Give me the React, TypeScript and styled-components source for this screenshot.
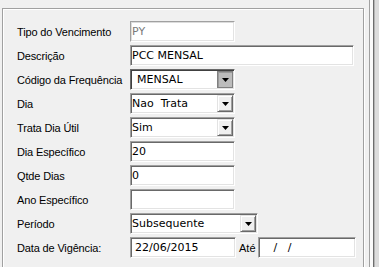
import styled, {createGlobalStyle} from "styled-components";

const GlobalStyle = createGlobalStyle`
    html, body {
        margin: 0;
        padding: 0;
        background: #f0f0f0;
    }
    body {
        font-family: "Liberation Sans", Arial, sans-serif;
    }
`;

type Control =
    | {kind: "text"; value: string; width: number; disabled?: boolean; indent?: number}
    | {kind: "select"; value: string; width: number; focused?: boolean};

const rows: {label: string; control: Control}[] = [
    {label: "Tipo do Vencimento", control: {kind: "text", value: "PY", width: 105, disabled: true}},
    {label: "Descrição", control: {kind: "text", value: "PCC MENSAL", width: 224}},
    {label: "Código da Frequência", control: {kind: "select", value: "MENSAL", width: 105, focused: true}},
    {label: "Dia", control: {kind: "select", value: "Nao  Trata", width: 105}},
    {label: "Trata Dia Útil", control: {kind: "select", value: "Sim", width: 105}},
    {label: "Dia Específico", control: {kind: "text", value: "20", width: 105}},
    {label: "Qtde Dias", control: {kind: "text", value: "0", width: 105}},
    {label: "Ano Específico", control: {kind: "text", value: "", width: 105}},
    {label: "Período", control: {kind: "select", value: "Subsequente", width: 128}},
];

function Arrow() {
    return (
        <svg width="7" height="4" viewBox="0 0 7 4">
            <polygon points="0,0 7,0 3.5,4" fill="#000"/>
        </svg>
    );
}

function renderControl(c: Control) {
    if (c.kind === "text") {
        return (
            <Field $w={c.width} $disabled={c.disabled} $indent={c.indent}>
                {c.value}
            </Field>
        );
    }
    return (
        <Field $w={c.width} $focused={c.focused} $indent={c.focused ? 6 : 1}>
            <Value>{c.value}</Value>
            <DropButton $pressed={c.focused}>
                <Arrow/>
            </DropButton>
        </Field>
    );
}

export default function App() {
    return (
        <>
            <GlobalStyle/>
            <Page>
                <GroupBox>
                    {rows.map((r) => (
                        <Row key={r.label}>
                            <Label>{r.label}</Label>
                            {renderControl(r.control)}
                        </Row>
                    ))}
                    <Row>
                        <Label>Data de Vigência:</Label>
                        <Field $w={106} $indent={4}>22/06/2015</Field>
                        <Ate>Até</Ate>
                        <Field $w={98} $indent={4}>{"   /   /"}</Field>
                    </Row>
                </GroupBox>
                <ScrollEdge/>
            </Page>
        </>
    );
}

const Page = styled.div`
    display: flex;
    align-items: flex-start;
    width: 379px;
    height: 267px;
    overflow: hidden;
    background: #f0f0f0;
`;

const GroupBox = styled.div`
    box-sizing: border-box;
    flex: none;
    display: flex;
    flex-direction: column;
    gap: 3px;
    width: 362px;
    height: 290px;
    margin: 8px 0 0 2px;
    padding: 12px 0 0 14px;
    border: 1px solid #a0a0a0;
    box-shadow: inset 1px 1px 0 #fff, 1px 1px 0 #fff;
`;

const ScrollEdge = styled.div`
    flex: none;
    align-self: stretch;
    width: 10px;
    margin-left: 5px;
    background: linear-gradient(to right,
    #a0a0a0 0 1px, #fafafa 1px 4px, #6d6d6d 4px 5px, #b4b4b4 5px 6px, #dcdcdc 6px 100%);
`;

const Row = styled.div`
    display: flex;
    align-items: center;
    height: 21px;
`;

const Label = styled.span`
    flex: none;
    width: 113px;
    font-size: 11px;
    letter-spacing: -0.15px;
    color: #000;
    white-space: nowrap;
`;

const Ate = styled.span`
    flex: none;
    width: 17px;
    padding: 0 2px 0 3px;
    font-size: 11px;
    color: #000;
`;

const Field = styled.div<{$w: number; $disabled?: boolean; $focused?: boolean; $indent?: number}>`
    box-sizing: border-box;
    flex: none;
    display: flex;
    align-items: center;
    width: ${(p) => p.$w}px;
    height: 21px;
    padding: 0 1px 0 ${(p) => p.$indent ?? 1}px;
    background: #fff;
    border: 1px solid;
    border-color: ${(p) => (p.$focused ? "#696969 #fff #fff #696969" : "#a0a0a0 #fff #fff #a0a0a0")};
    box-shadow: inset 1px 1px 0 ${(p) => (p.$disabled ? "#dcdcdc" : p.$focused ? "#404040" : "#696969")},
    inset -1px -1px 0 #e3e3e3;
    font-family: "DejaVu Sans", sans-serif;
    font-size: 11px;
    color: ${(p) => (p.$disabled ? "#7a7a7a" : "#000")};
    white-space: pre;
    overflow: hidden;
`;

const Value = styled.span`
    flex: 1;
    white-space: pre;
`;

const DropButton = styled.span<{$pressed?: boolean}>`
    box-sizing: border-box;
    flex: none;
    display: flex;
    align-items: center;
    justify-content: center;
    width: 16px;
    height: 17px;
    background: ${(p) => (p.$pressed ? "#bcbcbc" : "#f0f0f0")};
    border: 1px solid;
    border-color: ${(p) => (p.$pressed ? "#808080" : "#e3e3e3 #696969 #696969 #e3e3e3")};
    box-shadow: ${(p) => (p.$pressed ? "inset 1px 1px 0 #9a9a9a" : "inset 1px 1px 0 #fff, inset -1px -1px 0 #a0a0a0")};
`;
